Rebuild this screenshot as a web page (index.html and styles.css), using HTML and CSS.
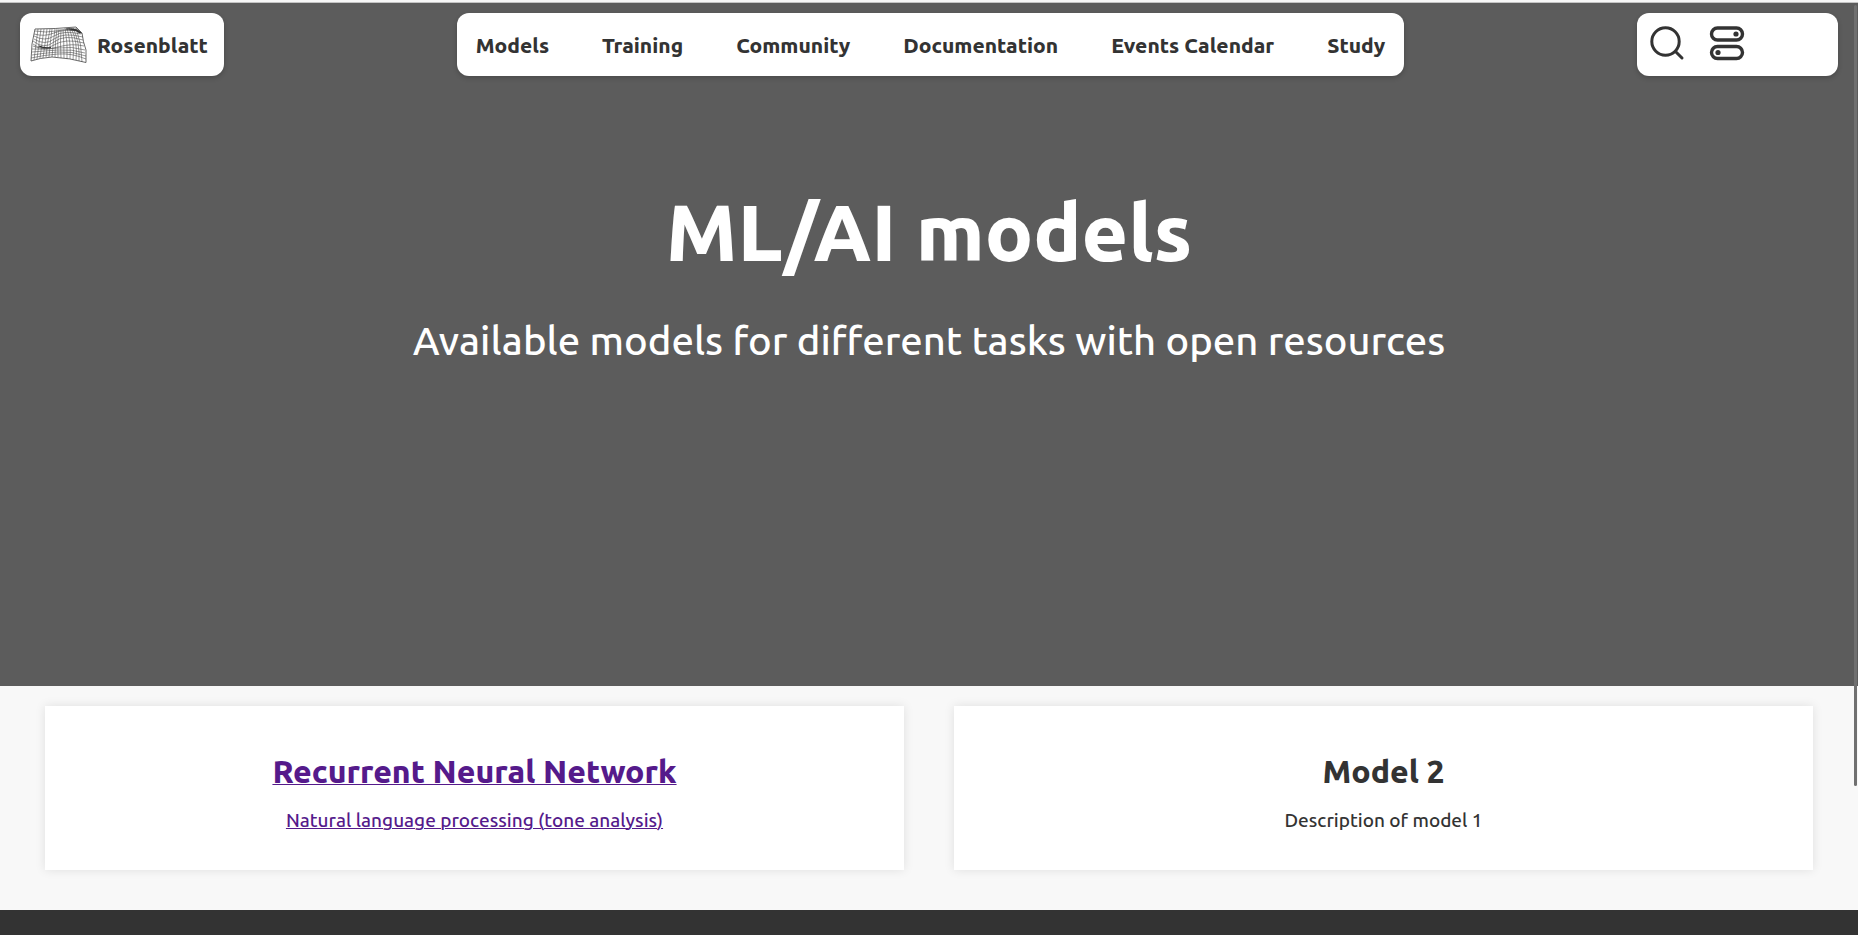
FILE: index.html
```html
<!DOCTYPE html>
<html lang="en">
<head>
<meta charset="utf-8">
<title>Rosenblatt</title>
<meta name="viewport" content="width=device-width, initial-scale=1">
<link rel="stylesheet" href="styles.css">
</head>
<body>
<header class="site-header">
  <a class="panel brand" href="#">
    <svg class="brand-logo" viewBox="0 0 58 38" fill="none" stroke="#444" stroke-width=".55" aria-hidden="true">
      <path stroke-width=".8" d="M5 3Q25 3 46 1L52 7Q53 16 56 24V36.5Q40 32 22 31Q9 32 1 35Q1 17 5 3Z"/>
      <path d="M5 5Q16 7 26 5T47 3L52 8M4 8Q15 11 24 7T49 5M4 10Q15 16 24 10T51 8M4 13Q15 20 24 13T53 11M3 15Q14 24 24 16T53 14M3 18Q13 26 24 19T54 17M3 20Q14 25 28 21T54 20M2 23Q14 24 28 22T55 24M2 26Q14 25 28 24T55 27M2 29Q14 27 28 26T56 30M1 32Q14 29 28 28T56 33"/>
      <path d="M8 3Q6 18 4 34M11 3Q9 16 7 33M14 3Q12 17 10 32M17 3Q15 18 13 32M20 3Q17 18 16 31M22 3Q20 18 19 31M25 3Q23 17 22 31M27 3Q25 15 25 31M29 3Q27 15 28 31M31 3Q30 16 31 32M33 3Q34 16 34 32M35 2Q38 18 37 33M37 2Q41 16 40 33M39 2Q45 16 43 34M41 2Q48 16 46 34M43 2Q50 16 49 35M46 2Q52 18 52 36"/>
      <path stroke="#333" stroke-width="1.2" d="M9 20Q14 22.5 21 21.5M36 3Q46 2 51 7M40 4Q46 3 50 7"/>
    </svg>
    <span>Rosenblatt</span>
  </a>
  <nav class="panel main-nav">
    <a href="#">Models</a>
    <a href="#">Training</a>
    <a href="#">Community</a>
    <a href="#">Documentation</a>
    <a href="#">Events Calendar</a>
    <a href="#">Study</a>
  </nav>
  <div class="panel tools">
    <button type="button" aria-label="Search">
      <svg viewBox="0 0 36 36" fill="none" stroke="#333" stroke-width="3" stroke-linecap="round" aria-hidden="true">
        <circle cx="16.5" cy="16.5" r="13.7"/><path d="M26.5 26.5L33 33"/>
      </svg>
    </button>
    <button type="button" aria-label="Settings">
      <svg viewBox="0 0 36 36" fill="none" stroke="#333" stroke-width="3.4" aria-hidden="true">
        <rect x="2.5" y="3" width="31" height="12" rx="6"/><rect x="2.5" y="21.5" width="31" height="12" rx="6"/>
        <circle cx="27" cy="9" r="2.6" fill="#333" stroke="none"/><circle cx="9" cy="27.5" r="2.6" fill="#333" stroke="none"/>
      </svg>
    </button>
  </div>
</header>
<main>
  <section class="hero">
    <h1>ML/AI models</h1>
    <p>Available models for different tasks with open resources</p>
  </section>
  <section class="models">
    <article class="card">
      <a href="#">
        <h2>Recurrent Neural Network</h2>
        <p>Natural language processing (tone analysis)</p>
      </a>
    </article>
    <article class="card">
      <h2>Model 2</h2>
      <p>Description of model 1</p>
    </article>
  </section>
</main>
<footer class="site-footer"></footer>
<div class="scroll-thumb"></div>
</body>
</html>
```
FILE: styles.css
```css
* {
  box-sizing: border-box;
}

body {
  display: flex;
  flex-direction: column;
  min-height: 100vh;
  margin: 0;
  border-top: 2px solid #f7f7f7;
  background: #f8f8f8;
  color: #333;
  font-family: Ubuntu, "Noto Sans", sans-serif;
  font-weight: 500;
}

.site-header {
  position: absolute;
  top: 13px;
  left: 0;
  right: 0;
  display: flex;
  justify-content: space-between;
  padding: 0 20px;
}

.panel {
  display: flex;
  align-items: center;
  height: 63px;
  border-radius: 12px;
  background: #fff;
  box-shadow: 0 2px 5px rgba(0, 0, 0, 0.2);
  color: #333;
  font-size: 21px;
  font-weight: 800;
}

.panel a,
a.panel {
  color: #333;
  text-decoration: none;
}

.brand {
  gap: 9px;
  min-width: 204px;
  padding: 0 10px;
}

.brand-logo {
  width: 58px;
  height: 38px;
}

.main-nav {
  gap: 53px;
  padding: 0 19px;
}

.tools {
  gap: 24px;
  width: 201px;
  padding: 0 12px 3px;
}

.tools button {
  width: 36px;
  height: 36px;
  padding: 0;
  border: 0;
  background: none;
}

.tools svg {
  display: block;
}

.hero {
  min-height: 684px;
  padding: 172px 20px 0;
  border-top: 1px solid #c4c4c4;
  background: #5c5c5c;
  color: #fff;
  text-align: center;
}

.hero h1 {
  margin: 0;
  font-size: 80px;
  font-weight: 800;
  line-height: 112px;
}

.hero p {
  margin: 24px 0 0;
  font-size: 40px;
  line-height: 60px;
}

.models {
  display: grid;
  grid-template-columns: 1fr 1fr;
  gap: 50px;
  padding: 20px 45px 40px;
}

.card {
  min-height: 164px;
  padding: 45px 20px 37px;
  background: #fff;
  box-shadow: 0 0 10px rgba(0, 0, 0, 0.1);
  text-align: center;
}

.card a {
  color: #551a8b;
  text-decoration: underline;
  text-decoration-thickness: 1px;
}

.card h2 {
  margin: 0;
  font-size: 32px;
  font-weight: 800;
  line-height: 40px;
}

.card p {
  margin: 16px 0 0;
  font-size: 19px;
  line-height: 26px;
}

.site-footer {
  flex: 1;
  background: #333;
}

.scroll-thumb {
  position: absolute;
  top: 5px;
  right: 1px;
  width: 3px;
  height: 781px;
  border-radius: 2px;
  background: #707070;
}
```
